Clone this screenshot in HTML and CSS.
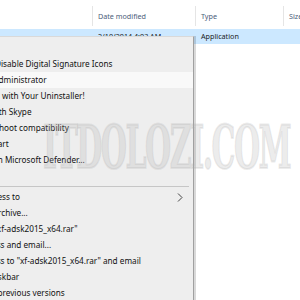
FILE: index.html
```html
<!DOCTYPE html>
<html>
<head>
    <title>Explorer Context Menu</title>
    <link rel="stylesheet" href="styles.css">
</head>
<body>

<!-- File list header -->
<div class="header">
    <div class="col col-name"></div>
    <div class="col col-date">Date modified</div>
    <div class="col col-type">Type</div>
    <div class="col col-size">Size</div>
</div>

<!-- Selected file row -->
<div class="fileRow selected">
    <div class="col col-name"></div>
    <div class="col col-date">2/10/2014 4:03 AM</div>
    <div class="col col-type">Application</div>
    <div class="col col-size"></div>
</div>

<!-- Right-click menu -->
<div class="contextMenu">
    <div class="menuItem">Open</div>
    <div class="menuItem">Enable/Disable Digital Signature Icons</div>
    <div class="menuItem hover">Run as administrator</div>
    <div class="menuItem">Uninstall with Your Uninstaller!</div>
    <div class="menuItem">Share with Skype</div>
    <div class="menuItem">Troubleshoot compatibility</div>
    <div class="menuItem">Pin to Start</div>
    <div class="menuItem">Scan with Microsoft Defender...</div>
    <div class="menuItem"></div>
    <div class="menuSeparator"></div>
    <div class="menuItem">Give access to
        <svg class="subArrow" width="6" height="9" viewBox="0 0 6 9">
            <path d="M1 0.5 L5 4.5 L1 8.5" fill="none" stroke="#444" stroke-width="1"/>
        </svg>
    </div>
    <div class="menuItem">Add to archive...</div>
    <div class="menuItem">Add to "xf-adsk2015_x64.rar"</div>
    <div class="menuItem">Compress and email...</div>
    <div class="menuItem">Compress to "xf-adsk2015_x64.rar" and email</div>
    <div class="menuItem">Pin to taskbar</div>
    <div class="menuItem">Restore previous versions</div>
</div>

<!-- Watermark -->
<div class="watermark">ITDOLOZI.COM</div>

</body>
</html>
```

FILE: styles.css
```css
/* General Styles */
body {
    margin: 0;
    width: 300px;
    height: 300px;
    overflow: hidden;
    position: relative;
    background-color: #ffffff;
    font-family: "Noto Sans", sans-serif;
    font-size: 7.2px;
    color: #1a1a1a;
}

/* Column layout */
.header, .fileRow {
    display: flex;
}

.col {
    flex: none;
    box-sizing: border-box;
    white-space: nowrap;
    overflow: hidden;
}

.col-name { width: 92px; }
.col-date { width: 103px; }
.col-type { width: 88px; }
.col-size { flex: 1; }

/* Header */
.header {
    height: 29px;
    align-items: center;
    color: #4c607a;
}

.header .col {
    height: 20px;
    line-height: 20px;
    margin-top: 3px;
    padding-left: 5px;
    border-left: 1px solid #e5e5e5;
}

.header .col-name {
    border-left: none;
}

/* Selected row */
.fileRow {
    height: 15px;
    line-height: 15px;
}

.fileRow .col {
    padding-left: 6px;
}

.selected {
    background-color: #cce8ff;
}

/* Context menu */
.contextMenu {
    position: absolute;
    top: 36px;
    left: -70px;
    width: 263px;
    padding-top: 3px;
    background-color: #eeeeee;
    border-top: 1px solid #d9d9d9;
    border-right: 1px solid #a0a0a0;
    box-shadow: 2px 0 0 rgba(0, 0, 0, 0.15);
    font-size: 8.2px;
}

.menuItem {
    position: relative;
    height: 16px;
    line-height: 16px;
    padding-left: 36px;
    white-space: nowrap;
    color: #111;
}

.menuItem.hover {
    background-color: #f9f9f9;
}

.menuSeparator {
    height: 1px;
    margin: 2px 4px 2px 0;
    background-color: #c6c6c6;
}

.subArrow {
    position: absolute;
    right: 10px;
    top: 4px;
}

/* Watermark */
.watermark {
    position: absolute;
    left: 43px;
    top: 117px;
    font-family: "DejaVu Serif", serif;
    font-weight: bold;
    font-size: 60px;
    line-height: 1;
    letter-spacing: -3px;
    color: rgba(170, 170, 170, 0.22);
    -webkit-text-stroke: 2px rgba(170, 170, 170, 0.22);
    transform: scaleX(0.5);
    transform-origin: left top;
    white-space: nowrap;
    pointer-events: none;
}
```
